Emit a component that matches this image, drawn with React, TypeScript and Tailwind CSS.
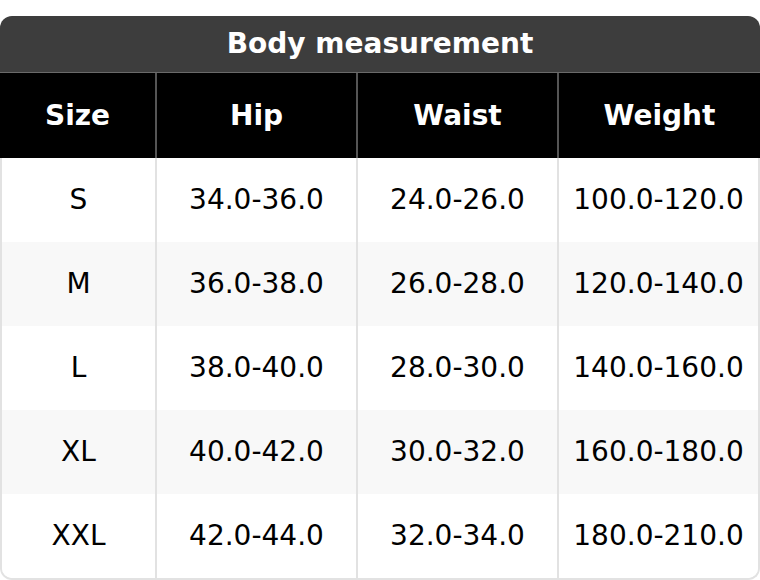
import React from 'react';

const rows = [
  ['S', '34.0-36.0', '24.0-26.0', '100.0-120.0'],
  ['M', '36.0-38.0', '26.0-28.0', '120.0-140.0'],
  ['L', '38.0-40.0', '28.0-30.0', '140.0-160.0'],
  ['XL', '40.0-42.0', '30.0-32.0', '160.0-180.0'],
  ['XXL', '42.0-44.0', '32.0-34.0', '180.0-210.0'],
];

const headers = ['Size', 'Hip', 'Waist', 'Weight'];

export default function App() {
  return (
    <div className="bg-white pt-4 w-[760px] h-[580px]" style={{ fontFamily: '"DejaVu Sans", sans-serif' }}>
      <div className="rounded-t-xl bg-[#3d3d3d] h-[57px] flex items-center justify-center border-b border-[#6a6a6a]">
        <h2 className="text-[28px] font-bold text-white">Body measurement</h2>
      </div>
      <div className="grid grid-cols-[155px_201px_201px_1fr] bg-black h-[85px]">
        {headers.map((h, i) => (
          <div
            key={h}
            className={`flex items-center justify-center text-[28px] font-bold text-white ${i > 0 ? 'border-l-2 border-[#555]' : ''}`}
          >
            {h}
          </div>
        ))}
      </div>
      <div className="border-x-2 border-b-2 border-[#e2e2e2] rounded-b-xl overflow-hidden">
        {rows.map((r, ri) => (
          <div
            key={r[0]}
            className={`grid grid-cols-[153px_201px_201px_1fr] h-[84px] ${ri % 2 === 1 ? 'bg-[#f8f8f8]' : 'bg-white'}`}
          >
            {r.map((c, ci) => (
              <div
                key={ci}
                className={`flex items-center justify-center text-[28px] text-black ${ci > 0 ? 'border-l-2 border-[#e2e2e2]' : ''}`}
              >
                {c}
              </div>
            ))}
          </div>
        ))}
      </div>
    </div>
  );
}
